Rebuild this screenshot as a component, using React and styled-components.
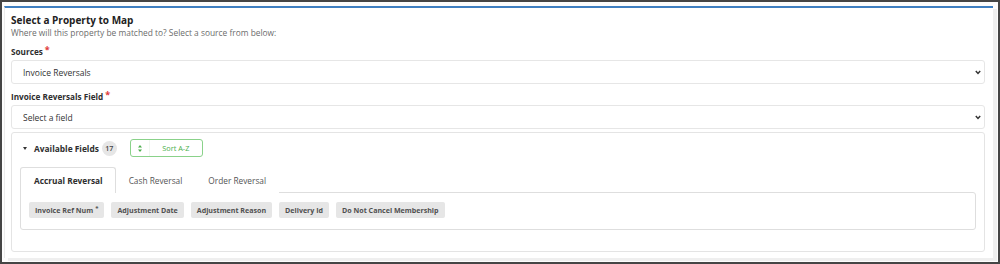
import React from "react";
import styled, { createGlobalStyle } from "styled-components";

const GlobalStyle = createGlobalStyle`
  html, body {
    margin: 0;
    padding: 0;
    background: #fff;
  }
  body {
    font-family: "Open Sans", "Liberation Sans", sans-serif;
    color: #333;
  }
  * {
    box-sizing: border-box;
  }
`;

const Frame = styled.div`
  width: 1000px;
  height: 264px;
  border: 2px solid #454545;
  padding: 4px 5px 3px 2px;
  background: #fdfdfd;
`;

const Panel = styled.div`
  height: 252px;
  background: #fff;
  border-top: 2px solid #3f7fc1;
  border-left: 1px solid #ececec;
  box-shadow: 4px 3px 0 #efefef;
  padding: 6px 8px 0 6px;
`;

const Title = styled.h2`
  margin: 0;
  font-size: 10px;
  font-weight: 700;
  line-height: 13px;
  color: #222;
`;

const Subtitle = styled.p`
  margin: 0;
  font-size: 8.4px;
  line-height: 11px;
  color: #6c6c6c;
`;

const Label = styled.div`
  margin-top: ${(p) => p.$top}px;
  font-size: 8.2px;
  font-weight: 700;
  line-height: 11px;
  color: #2e2e2e;
`;

const Required = styled.span`
  color: #e03a3a;
  font-size: 9px;
  margin-left: 2px;
  vertical-align: top;
  position: relative;
  top: -2px;
`;

const SelectBox = styled.div`
  display: flex;
  align-items: center;
  height: 24px;
  margin-top: 3px;
  border: 1px solid #e6e6e6;
  border-radius: 3px;
  padding: 0 3px 0 11px;
  background: #fff;
`;

const NativeSelect = styled.select`
  flex: 1;
  appearance: none;
  border: none;
  outline: none;
  background: transparent;
  font-family: inherit;
  font-size: 8.5px;
  color: #333;
  padding: 0;
`;

const Section = styled.div`
  margin-top: 3px;
  height: 120px;
  border: 1px solid #e4e4e4;
  border-radius: 3px;
  padding: 6px 8px 0 8px;
`;

const FieldsHeader = styled.div`
  display: flex;
  align-items: center;
  height: 18px;
  padding-left: 3px;
`;

const Caret = styled.span`
  width: 0;
  height: 0;
  border-left: 2.5px solid transparent;
  border-right: 2.5px solid transparent;
  border-top: 3.5px solid #333;
  margin-right: 7px;
`;

const HeaderText = styled.span`
  font-size: 8.4px;
  font-weight: 700;
  color: #2e2e2e;
`;

const Count = styled.span`
  display: inline-flex;
  align-items: center;
  justify-content: center;
  width: 15px;
  height: 15px;
  border-radius: 50%;
  background: #e6e6e6;
  font-size: 7.2px;
  font-weight: 600;
  color: #444;
  margin-left: 3px;
`;

const SortButton = styled.button`
  display: flex;
  align-items: stretch;
  height: 18px;
  width: 73px;
  margin-left: 13px;
  padding: 0;
  border: 1px solid #8ad28a;
  border-radius: 3px;
  background: #fff;
  font-family: inherit;
  cursor: pointer;
`;

const SortIcon = styled.span`
  display: flex;
  align-items: center;
  justify-content: center;
  width: 19px;
  border-right: 1px solid #f0f7f0;
`;

const SortLabel = styled.span`
  flex: 1;
  display: flex;
  align-items: center;
  justify-content: center;
  font-size: 7.3px;
  color: #4cb04c;
`;

const Tabs = styled.div`
  display: flex;
  margin-top: 10px;
  height: 25px;
`;

const Tab = styled.div`
  display: flex;
  align-items: center;
  padding: ${(p) => (p.$active ? "0 12px 0 13px" : "0 12px 0 12px")};
  font-size: 8.3px;
  font-weight: ${(p) => (p.$active ? 700 : 400)};
  color: ${(p) => (p.$active ? "#2e2e2e" : "#555")};
  border: 1px solid ${(p) => (p.$active ? "#dedede" : "transparent")};
  border-bottom: none;
  border-radius: 3px 3px 0 0;
  background: #fff;
  position: relative;
  margin-bottom: -1px;
  z-index: 1;
`;

const TabBody = styled.div`
  display: flex;
  flex-wrap: wrap;
  align-content: flex-start;
  gap: 7px;
  height: 38px;
  border: 1px solid #dedede;
  border-radius: 0 3px 3px 3px;
  padding: 9px 8px 0 8px;
`;

const Chip = styled.span`
  display: inline-flex;
  align-items: center;
  height: 16px;
  padding: 0 6px;
  border-radius: 2px;
  background: #e6e6e6;
  font-size: 7.1px;
  font-weight: 700;
  color: #505050;
`;

const Star = styled.span`
  font-size: 6px;
  margin-left: 2px;
  align-self: flex-start;
  margin-top: 2px;
`;

const Chevron = () => (
  <svg width="6" height="5" viewBox="0 0 6 5">
    <path d="M0.8 1 L3 3.4 L5.2 1" fill="none" stroke="#333" strokeWidth="1.5" />
  </svg>
);

const UpDown = () => (
  <svg width="4" height="7" viewBox="0 0 4 7">
    <path d="M2 0 L4 2.6 H0 Z M0 4.4 H4 L2 7 Z" fill="#4cae4c" />
  </svg>
);

const fields = [
  { name: "Invoice Ref Num", required: true },
  { name: "Adjustment Date" },
  { name: "Adjustment Reason" },
  { name: "Delivery Id" },
  { name: "Do Not Cancel Membership" },
];

const tabs = ["Accrual Reversal", "Cash Reversal", "Order Reversal"];

const App = () => {
  return (
    <>
      <GlobalStyle />
      <Frame>
        <Panel>
          <Title>Select a Property to Map</Title>
          <Subtitle>Where will this property be matched to? Select a source from below:</Subtitle>

          <Label $top={8}>
            Sources<Required>*</Required>
          </Label>
          <SelectBox>
            <NativeSelect defaultValue="invoice-reversals">
              <option value="invoice-reversals">Invoice Reversals</option>
            </NativeSelect>
            <Chevron />
          </SelectBox>

          <Label $top={7}>
            Invoice Reversals Field<Required>*</Required>
          </Label>
          <SelectBox>
            <NativeSelect defaultValue="">
              <option value="">Select a field</option>
            </NativeSelect>
            <Chevron />
          </SelectBox>

          <Section>
            <FieldsHeader>
              <Caret />
              <HeaderText>Available Fields</HeaderText>
              <Count>17</Count>
              <SortButton>
                <SortIcon>
                  <UpDown />
                </SortIcon>
                <SortLabel>Sort A-Z</SortLabel>
              </SortButton>
            </FieldsHeader>

            <Tabs>
              {tabs.map((t, i) => (
                <Tab key={t} $active={i === 0}>
                  {t}
                </Tab>
              ))}
            </Tabs>
            <TabBody>
              {fields.map((f) => (
                <Chip key={f.name}>
                  {f.name}
                  {f.required && <Star>*</Star>}
                </Chip>
              ))}
            </TabBody>
          </Section>
        </Panel>
      </Frame>
    </>
  );
};

export default App;
